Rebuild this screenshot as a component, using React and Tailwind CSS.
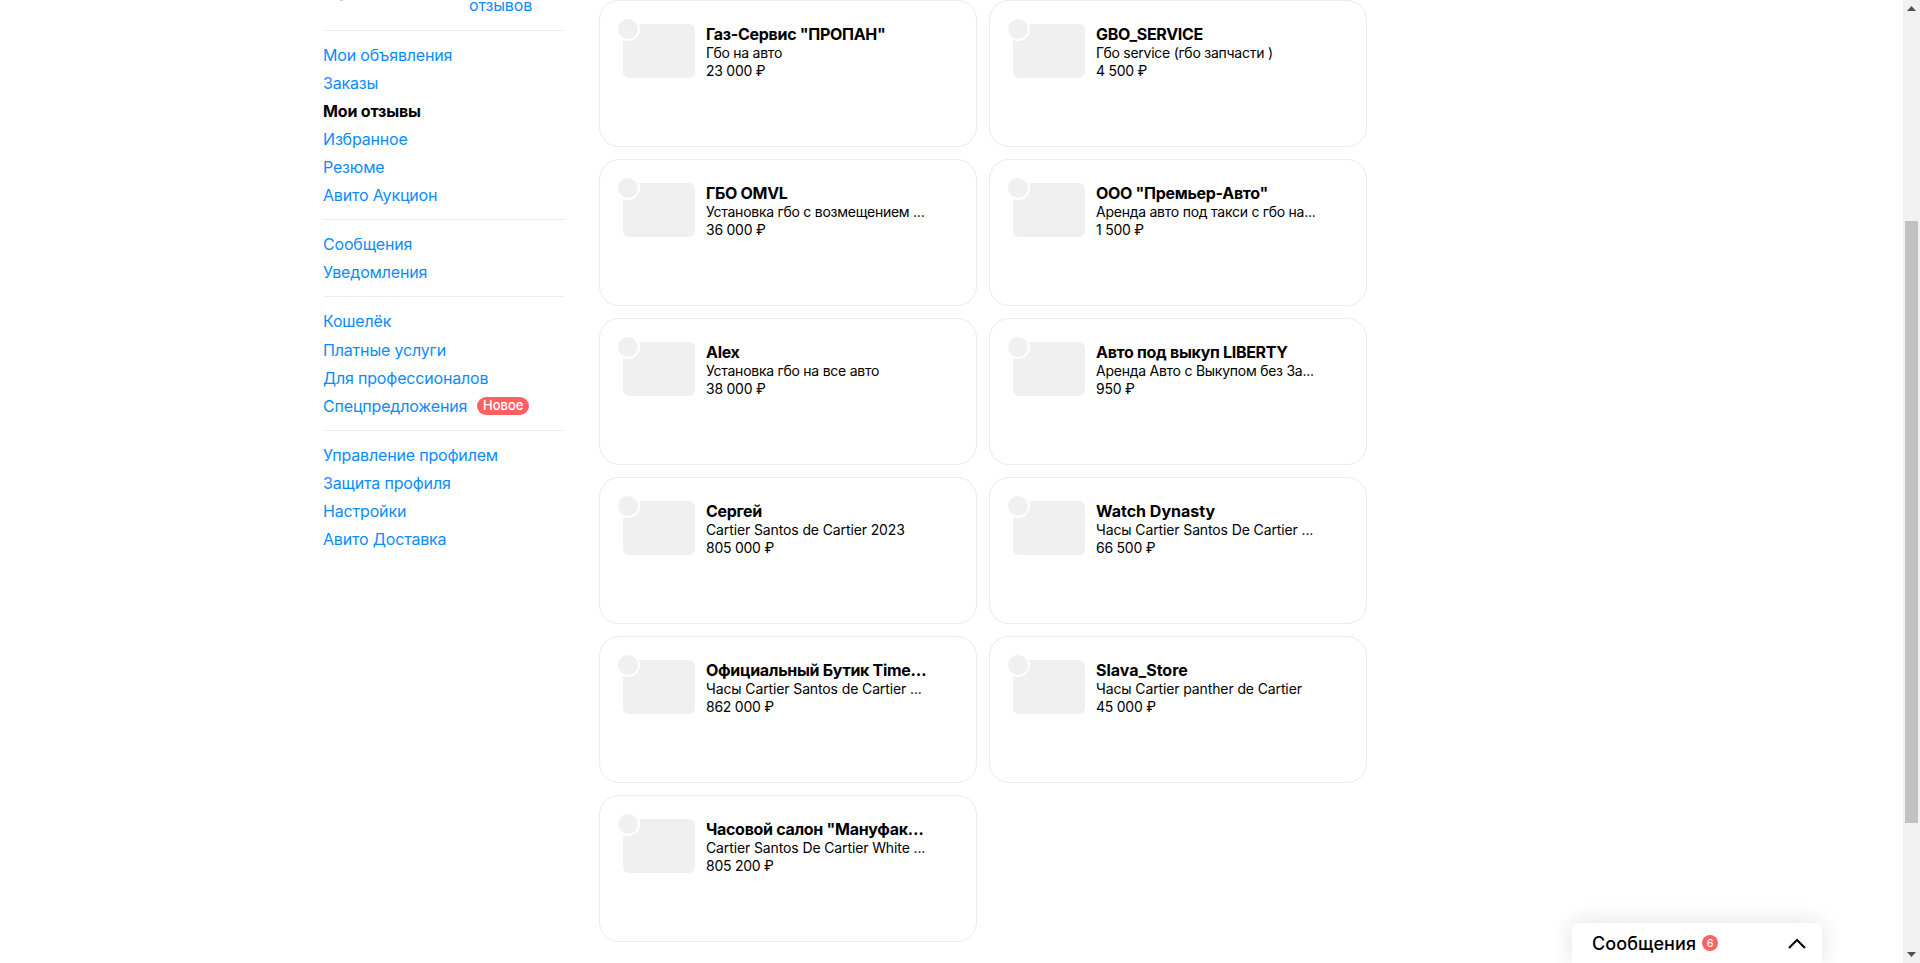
const menuGroups = [
  [
    { label: "Мои объявления" },
    { label: "Заказы" },
    { label: "Мои отзывы", active: true },
    { label: "Избранное" },
    { label: "Резюме" },
    { label: "Авито Аукцион" },
  ],
  [{ label: "Сообщения" }, { label: "Уведомления" }],
  [
    { label: "Кошелёк", tall: true },
    { label: "Платные услуги" },
    { label: "Для профессионалов" },
    { label: "Спецпредложения", badge: "Новое" },
  ],
  [
    { label: "Управление профилем" },
    { label: "Защита профиля" },
    { label: "Настройки" },
    { label: "Авито Доставка" },
  ],
]

// latin: text set mostly in latin letters, which run a little wider here
const cards = [
  { title: 'Газ-Сервис "ПРОПАН"', text: "Гбо на авто", price: "23 000 ₽" },
  { title: "GBO_SERVICE", text: "Гбо service (гбо запчасти )", price: "4 500 ₽" },
  { title: "ГБО OMVL", text: "Установка гбо с возмещением ...", price: "36 000 ₽" },
  { title: 'ООО "Премьер-Авто"', text: "Аренда авто под такси с гбо на...", price: "1 500 ₽" },
  { title: "Alex", text: "Установка гбо на все авто", price: "38 000 ₽" },
  { title: "Авто под выкуп LIBERTY", text: "Аренда Авто с Выкупом без За...", price: "950 ₽" },
  { title: "Сергей", text: "Cartier Santos de Cartier 2023", price: "805 000 ₽", latin: true },
  { title: "Watch Dynasty", text: "Часы Cartier Santos De Cartier ...", price: "66 500 ₽", latin: true, latinTitle: true },
  { title: "Официальный Бутик Time…", text: "Часы Cartier Santos de Cartier ...", price: "862 000 ₽", latin: true },
  { title: "Slava_Store", text: "Часы Cartier panther de Cartier", price: "45 000 ₽", latin: true, latinTitle: true },
  { title: 'Часовой салон "Мануфак…', text: "Cartier Santos De Cartier White ...", price: "805 200 ₽", latin: true },
]

function Sidebar() {
  return (
    <aside className="w-[240px] shrink-0 -mt-[25px]">
      {/* Rating row, scrolled mostly out of view */}
      <div className="flex h-[40px] mb-[15px]">
        <div className="w-[145px] text-[24px] leading-[26px] font-bold text-black">5,0</div>
        <div className="mt-[20px] text-[16px] leading-[20px] tracking-[-0.15px] text-[#0a8cff]">отзывов</div>
      </div>

      {menuGroups.map((group, i) => (
        <div key={i} className="border-t border-[#ebebeb] py-[10px]">
          {group.map((item) => (
            <div
              key={item.label}
              className={`-ml-px flex h-[28px] items-center text-[16px] tracking-[-0.17px] ${item.tall ? "mb-px" : ""} ${
                item.active ? "font-bold text-black" : "text-[#0a8cff]"
              }`}
            >
              {item.label}
              {item.badge && (
                <span className="ml-[10px] flex h-[18px] w-[52px] items-center justify-center rounded-full bg-[#ff6163] text-[13px] font-medium tracking-normal text-white">
                  {item.badge}
                </span>
              )}
            </div>
          ))}
        </div>
      ))}
    </aside>
  )
}

function Card({ title, text, price, latin, latinTitle }) {
  return (
    <div className="relative flex h-[147px] gap-[11px] overflow-hidden rounded-[20px] border border-[#ebebeb] pl-[23px] pt-[23px]">
      <div className="relative h-[54px] w-[72px] shrink-0 rounded-md bg-[#f0f0f0]">
        <div className="absolute -left-[7px] -top-[7px] h-[24px] w-[24px] rounded-full border-2 border-white bg-[#f0f0f0]"></div>
      </div>
      <div className="whitespace-nowrap text-black">
        <div className={`text-[16px] leading-[20px] font-bold ${latinTitle ? "tracking-normal" : "tracking-[-0.3px]"}`}>
          {title}
        </div>
        <div className={`text-[14px] leading-[18px] ${latin ? "tracking-[-0.12px]" : "tracking-[-0.25px]"}`}>{text}</div>
        <div className="text-[14px] leading-[18px] tracking-[-0.25px]">{price}</div>
      </div>
    </div>
  )
}

function Scrollbar() {
  return (
    <div className="flex w-[17px] shrink-0 flex-col items-center bg-[#f1f1f1]">
      <svg className="mt-[6px]" width="9" height="5" viewBox="0 0 9 5">
        <path d="M4.5 0 9 5H0z" fill="#505050" />
      </svg>
      <div className="mt-[210px] h-[602px] w-[13px] bg-[#c1c1c1]"></div>
      <svg className="mb-[6px] mt-auto" width="9" height="5" viewBox="0 0 9 5">
        <path d="M0 0h9L4.5 5z" fill="#505050" />
      </svg>
    </div>
  )
}

export default function App() {
  return (
    <div className="relative flex h-[963px] overflow-hidden bg-white font-['Inter',sans-serif]">
      <div className="flex flex-1 pl-[324px]">
        <Sidebar />
        <main className="ml-[35px] grid h-fit grid-cols-[378px_378px] gap-x-[12px] gap-y-[12px]">
          {cards.map((card) => (
            <Card key={card.title} {...card} />
          ))}
        </main>
      </div>
      <Scrollbar />

      {/* Messenger widget */}
      <div className="absolute bottom-0 left-[1572px] flex h-[40px] w-[250px] items-center rounded-t-md bg-white pl-[20px] pr-[16px] shadow-[0_0_24px_rgba(0,0,0,0.12)]">
        <span className="text-[18px] font-medium tracking-[0.1px] text-black">Сообщения</span>
        <span className="ml-[6px] flex h-[16px] w-[16px] items-center justify-center rounded-full bg-[#ff6163] text-[11px] font-medium text-white">
          6
        </span>
        <svg className="ml-auto" width="18" height="11" viewBox="0 0 18 11" fill="none">
          <path d="M1 10 9 2l8 8" stroke="#000" strokeWidth="2" />
        </svg>
      </div>
    </div>
  )
}
